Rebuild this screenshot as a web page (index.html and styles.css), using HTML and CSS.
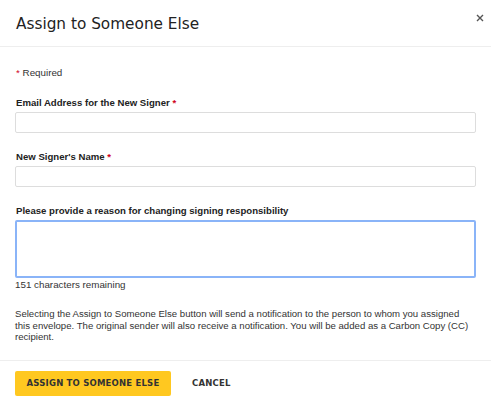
FILE: index.html
```html
<!DOCTYPE html>
<html lang="en">
<head>
    <meta charset="UTF-8">
    <meta name="viewport" content="width=device-width, initial-scale=1.0">
    <title>Assign to Someone Else</title>
    <link rel="stylesheet" href="styles.css">
</head>
<body>
    <div class="dialog">
        <div class="dialog-header">
            <h1>Assign to Someone Else</h1>
            <button class="close-button" aria-label="Close">
                <svg width="8" height="8" viewBox="0 0 8 8"><path d="M1 1L7 7M7 1L1 7" stroke="#555" stroke-width="1.4"/></svg>
            </button>
        </div>
        <div class="dialog-body">
            <p class="required-note"><span class="star">*</span> Required</p>

            <label class="field-label" for="email">Email Address for the New Signer <span class="star">*</span></label>
            <input class="field-input" type="text" id="email">

            <label class="field-label" for="name">New Signer's Name <span class="star">*</span></label>
            <input class="field-input" type="text" id="name">

            <label class="field-label" for="reason">Please provide a reason for changing signing responsibility</label>
            <textarea class="field-textarea" id="reason"></textarea>
            <p class="remaining">151 characters remaining</p>

            <p class="notice">Selecting the Assign to Someone Else button will send a notification to the person to whom you assigned this envelope. The original sender will also receive a notification. You will be added as a Carbon Copy (CC) recipient.</p>
        </div>
        <div class="dialog-footer">
            <button class="primary-button">Assign to Someone Else</button>
            <button class="text-button">Cancel</button>
        </div>
    </div>
</body>
</html>
```

FILE: styles.css
```css
body {
    margin: 0;
    background-color: #ffffff;
    font-family: 'Liberation Sans', Arial, sans-serif;
    font-size: 9.8px;
    color: #333333;
}
.dialog {
    position: relative;
    width: 491px;
}
.dialog-header {
    height: 47px;
    border-bottom: 1px solid #eeeeee;
    box-sizing: border-box;
    padding: 15px 16px 0;
}
.dialog-header h1 {
    margin: 0;
    font-family: 'DejaVu Sans', sans-serif;
    font-size: 15.3px;
    font-weight: normal;
    color: #222222;
}
.close-button {
    position: absolute;
    top: 13px;
    right: 6px;
    width: 10px;
    height: 10px;
    padding: 0;
    border: none;
    background: none;
    display: flex;
    align-items: center;
    justify-content: center;
}
.dialog-body {
    padding: 20px 15px 0;
}
.required-note {
    margin: 0 0 18px 1px;
    line-height: 12px;
}
.star {
    color: #d0021b;
}
.field-label {
    display: block;
    margin: 0 0 3px 1px;
    font-size: 9.6px;
    font-weight: bold;
    line-height: 12px;
    color: #222222;
}
.field-input {
    display: block;
    width: 461px;
    height: 21px;
    box-sizing: border-box;
    margin: 0 0 18px;
    border: 1px solid #dddddd;
    border-radius: 2px;
}
.field-textarea {
    display: block;
    width: 461px;
    height: 58px;
    box-sizing: border-box;
    margin: 0;
    border: 2px solid #8ab4f8;
    border-radius: 2px;
    resize: none;
}
.remaining {
    margin: 1px 0 0;
    line-height: 12px;
}
.notice {
    margin: 17px 0 0;
    font-size: 9.6px;
    line-height: 11.5px;
}
.dialog-footer {
    margin-top: 17px;
    border-top: 1px solid #eeeeee;
    padding: 10px 15px;
    display: flex;
    align-items: center;
    gap: 21px;
}
.primary-button {
    height: 25px;
    width: 156px;
    padding: 0;
    border: none;
    border-radius: 2px;
    background-color: #ffc820;
    font-family: 'DejaVu Sans', sans-serif;
    font-size: 8.5px;
    font-weight: bold;
    letter-spacing: 0.2px;
    white-space: nowrap;
    text-transform: uppercase;
    color: #333333;
}
.text-button {
    border: none;
    background: none;
    padding: 0;
    font-family: 'DejaVu Sans', sans-serif;
    font-size: 8.5px;
    font-weight: bold;
    letter-spacing: 0.2px;
    text-transform: uppercase;
    color: #333333;
}
```
